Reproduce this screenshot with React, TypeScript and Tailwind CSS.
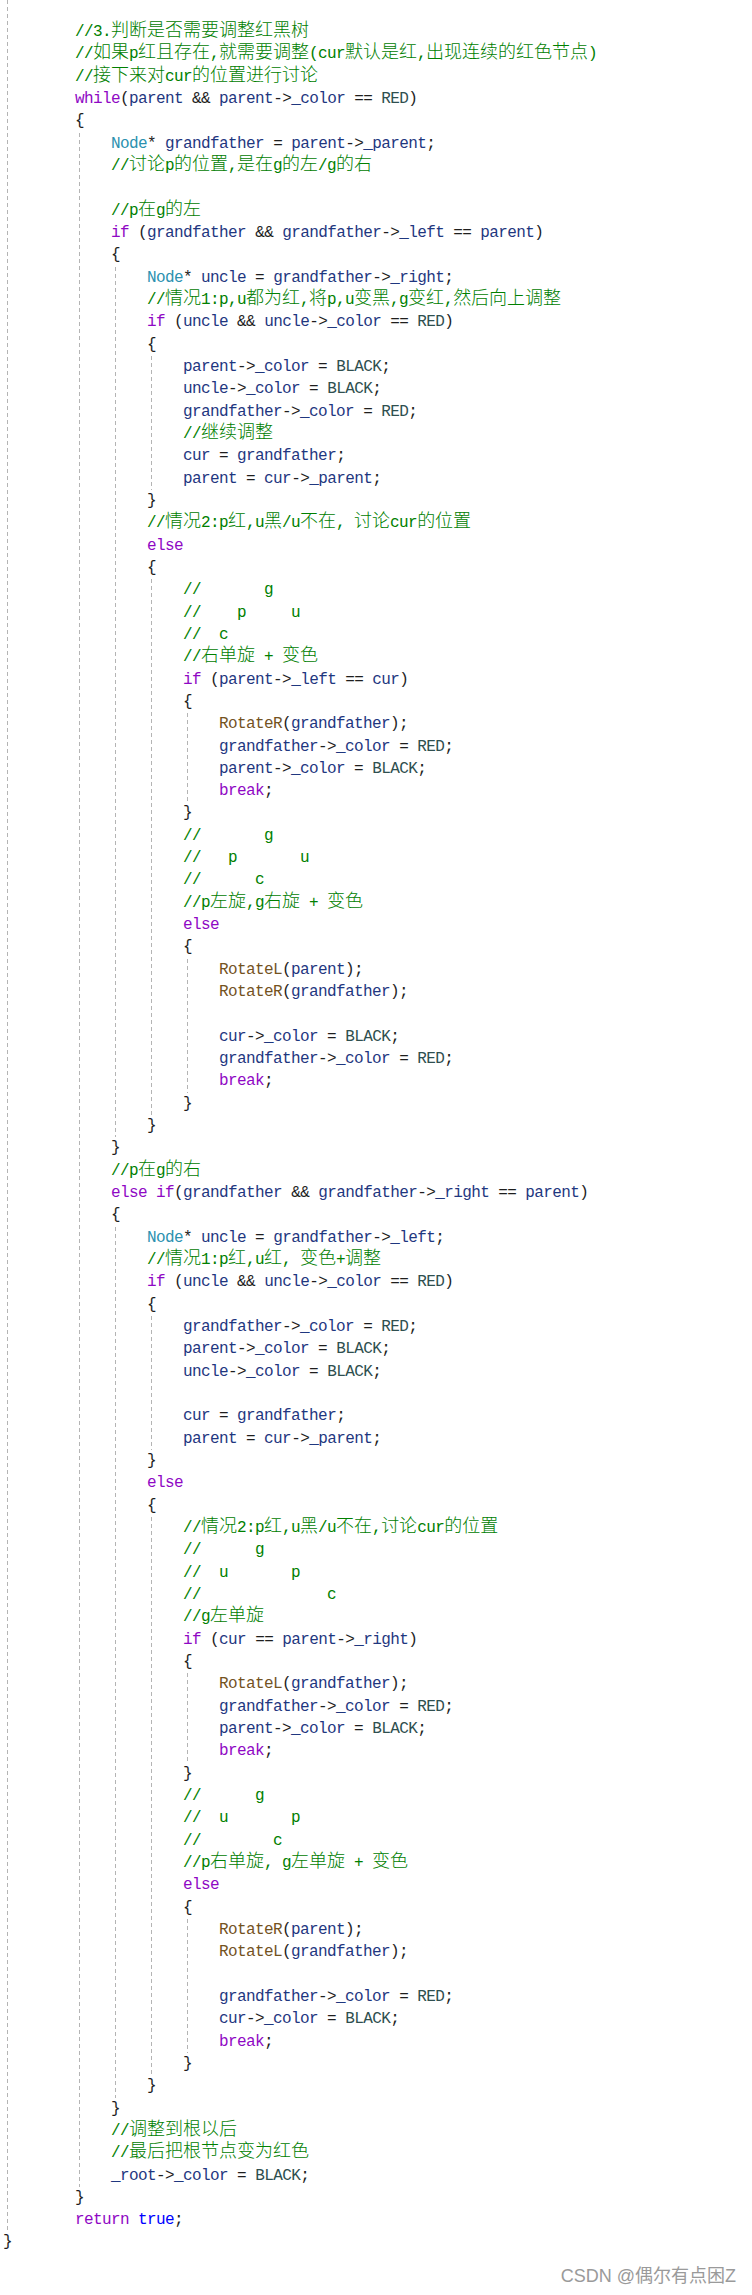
import React from "react";

const LH = 22.33;
const TOP = 21;

const SRC = `        //3.判断是否需要调整红黑树
        //如果p红且存在,就需要调整(cur默认是红,出现连续的红色节点)
        //接下来对cur的位置进行讨论
        while(parent && parent->_color == RED)
        {
            Node* grandfather = parent->_parent;
            //讨论p的位置,是在g的左/g的右

            //p在g的左
            if (grandfather && grandfather->_left == parent)
            {
                Node* uncle = grandfather->_right;
                //情况1:p,u都为红,将p,u变黑,g变红,然后向上调整
                if (uncle && uncle->_color == RED)
                {
                    parent->_color = BLACK;
                    uncle->_color = BLACK;
                    grandfather->_color = RED;
                    //继续调整
                    cur = grandfather;
                    parent = cur->_parent;
                }
                //情况2:p红,u黑/u不在, 讨论cur的位置
                else
                {
                    //       g
                    //    p     u
                    //  c
                    //右单旋 + 变色
                    if (parent->_left == cur)
                    {
                        RotateR(grandfather);
                        grandfather->_color = RED;
                        parent->_color = BLACK;
                        break;
                    }
                    //       g
                    //   p       u
                    //      c
                    //p左旋,g右旋 + 变色
                    else
                    {
                        RotateL(parent);
                        RotateR(grandfather);

                        cur->_color = BLACK;
                        grandfather->_color = RED;
                        break;
                    }
                }
            }
            //p在g的右
            else if(grandfather && grandfather->_right == parent)
            {
                Node* uncle = grandfather->_left;
                //情况1:p红,u红, 变色+调整
                if (uncle && uncle->_color == RED)
                {
                    grandfather->_color = RED;
                    parent->_color = BLACK;
                    uncle->_color = BLACK;

                    cur = grandfather;
                    parent = cur->_parent;
                }
                else
                {
                    //情况2:p红,u黑/u不在,讨论cur的位置
                    //      g
                    //  u       p
                    //              c
                    //g左单旋
                    if (cur == parent->_right)
                    {
                        RotateL(grandfather);
                        grandfather->_color = RED;
                        parent->_color = BLACK;
                        break;
                    }
                    //      g
                    //  u       p
                    //        c
                    //p右单旋, g左单旋 + 变色
                    else
                    {
                        RotateR(parent);
                        RotateL(grandfather);

                        grandfather->_color = RED;
                        cur->_color = BLACK;
                        break;
                    }
                }
            }
            //调整到根以后
            //最后把根节点变为红色
            _root->_color = BLACK;
        }
        return true;
}`;

const lines = SRC.split("\n");

const KW = new Set(["while", "if", "else", "break", "return"]);
const FN = new Set(["RotateR", "RotateL"]);
const EN = new Set(["RED", "BLACK"]);

const isCjk = /[\u3000-\u9fff\uff00-\uffef]/;
const splitCjk = /[\u3000-\u9fff\uff00-\uffef]+|[^\u3000-\u9fff\uff00-\uffef]+/g;

function wordColor(w: string) {
  if (KW.has(w)) return "text-[#8f08c4]";
  if (w === "true") return "text-[#0000ff]";
  if (w === "Node") return "text-[#2b91af]";
  if (FN.has(w)) return "text-[#74531f]";
  if (EN.has(w)) return "text-[#2f4f4f]";
  return "text-[#1f377f]";
}

// indent guides: pair up braces, the function's own "{" sits above the crop
const guides: { col: number; top: number; height: number }[] = [];
const stack: { line: number; col: number }[] = [{ line: -1, col: 0 }];
lines.forEach((l, i) => {
  const t = l.trim();
  const col = l.length - l.trimStart().length;
  if (t === "{") stack.push({ line: i, col });
  if (t === "}") {
    const o = stack.pop()!;
    const top = o.line < 0 ? 0 : TOP + (o.line + 1) * LH;
    guides.push({ col: o.col, top, height: TOP + i * LH - top });
  }
});

const Comment = ({ text }: { text: string }) => (
  <span className="text-[#008000]">
    {(text.match(splitCjk) || []).map((part, i) =>
      isCjk.test(part) ? (
        <span
          key={i}
          className="font-['Noto_Sans_CJK_SC',sans-serif] font-light text-[18px] leading-[0] tracking-normal"
        >
          {part}
        </span>
      ) : (
        <span key={i}>{part}</span>
      )
    )}
  </span>
);

const CodeLine = ({ text }: { text: string }) => {
  const at = text.indexOf("//");
  const code = at >= 0 ? text.slice(0, at) : text;
  const comment = at >= 0 ? text.slice(at) : "";
  const tokens = code.match(/[A-Za-z_]\w*|\s+|[^\sA-Za-z_]+/g) || [];
  return (
    <div className="h-[22.33px] leading-[22.33px] whitespace-pre">
      {tokens.map((tok, i) =>
        /^[A-Za-z_]/.test(tok) ? (
          <span key={i} className={wordColor(tok)}>
            {tok}
          </span>
        ) : (
          <span key={i} className="text-[#1e1e1e]">
            {tok}
          </span>
        )
      )}
      {comment && <Comment text={comment} />}
    </div>
  );
};

export default function App() {
  return (
    <div className="relative w-[752px] min-h-[2295px] bg-white flex flex-col">
      {/* Code */}
      <div className="pt-[21px] pl-[3px] font-['Liberation_Mono','Noto_Sans_CJK_SC',monospace] text-[16px] tracking-[-0.6px]">
        {lines.map((l, i) => (
          <CodeLine key={i} text={l} />
        ))}
      </div>

      {guides.map((g, i) => (
        <span
          key={i}
          className="absolute w-px bg-[repeating-linear-gradient(to_bottom,#b4b4b4_0_4px,transparent_4px_7px)]"
          style={{ left: 9 * g.col + 7, top: g.top, height: g.height }}
        />
      ))}

      {/* Watermark */}
      <div className="mt-[13px] flex justify-end pr-[16px]">
        <span className="font-['Liberation_Sans','Noto_Sans_CJK_SC',sans-serif] text-[18px] leading-[19px] text-[#9a9a9a]">
          CSDN @偶尔有点困Z
        </span>
      </div>
    </div>
  );
}
